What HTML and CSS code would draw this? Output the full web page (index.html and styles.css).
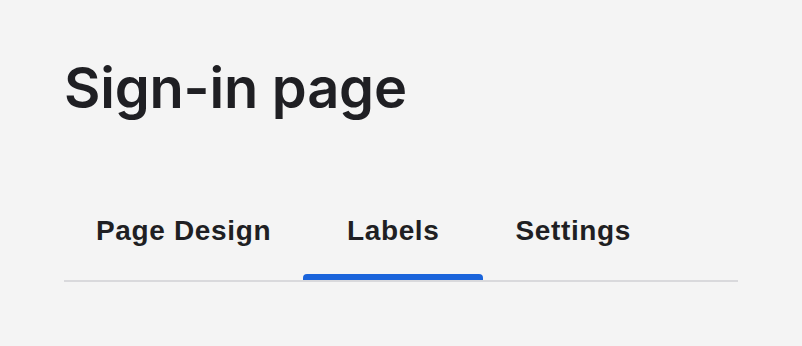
FILE: index.html
```html
<!DOCTYPE html>
<html>

<head>
	<meta charset="utf-8">
	<meta name="viewport" content="width=device-width">
	<link rel="stylesheet" href="styles.css">
</head>

<body>
	<div class="page">
		<h1 class="title">Sign-in page</h1>
		<nav class="tabs">
			<a class="tab"><span class="tab-label">Page Design</span></a>
			<a class="tab active"><span class="tab-label">Labels</span></a>
			<a class="tab"><span class="tab-label">Settings</span></a>
		</nav>
	</div>
</body>

</html>
```

FILE: styles.css
```css
body {
	margin: 0;
	background-color: #f4f4f4;
	color: #1f1f23;
}

.page {
	padding: 50px 64px 0 64px;
}

.title {
	font-family: Inter, "Noto Sans", sans-serif;
	font-weight: 600;
	font-size: 56px;
	letter-spacing: -0.2px;
	line-height: 76px;
	margin: 0;
}

.tabs {
	display: flex;
	margin-top: 89px;
	border-bottom: 2px solid #d9d9dc;
}

.tab {
	display: flex;
	flex-direction: column;
	min-width: 180px;
	font-family: "Liberation Sans", Arial, sans-serif;
	font-weight: bold;
	font-size: 28px;
	letter-spacing: 0.65px;
	line-height: 32px;
	text-align: center;
	cursor: pointer;
}

.tab-label {
	padding: 0 32px;
}

.tab::after {
	content: "";
	display: block;
	height: 6px;
	margin-top: 27px;
	border-radius: 4px 4px 0 0;
}

.tab.active::after {
	background-color: #1a64db;
}
```
